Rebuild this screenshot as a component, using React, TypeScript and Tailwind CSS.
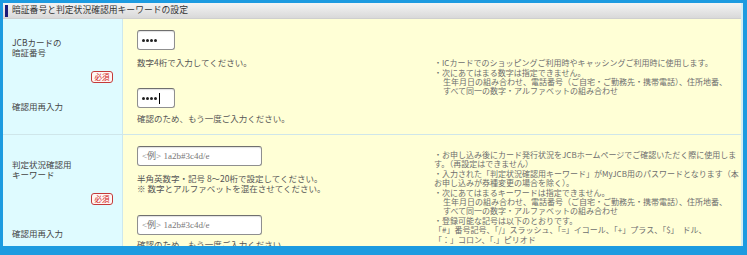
import React from 'react';

const font = "font-['Noto_Sans_CJK_JP','Noto_Sans',sans-serif]";

const pinNotes = [
  { text: '・ICカードでのショッピングご利用時やキャッシングご利用時に使用します。' },
  { text: '・次にあてはまる数字は指定できません。' },
  { text: '生年月日の組み合わせ、電話番号（ご自宅・ご勤務先・携帯電話）、住所地番、', indent: true },
  { text: 'すべて同一の数字・アルファベットの組み合わせ', indent: true },
];

const keywordNotes = [
  { text: '・お申し込み後にカード発行状況をJCBホームページでご確認いただく際に使用しま' },
  { text: 'す。（再設定はできません）' },
  { text: '・入力された「判定状況確認用キーワード」がMyJCB用のパスワードとなります（本' },
  { text: 'お申し込みが券種変更の場合を除く）。' },
  { text: '・次にあてはまるキーワードは指定できません。' },
  { text: '生年月日の組み合わせ、電話番号（ご自宅・ご勤務先・携帯電話）、住所地番、', indent: true },
  { text: 'すべて同一の数字・アルファベットの組み合わせ', indent: true },
  { text: '・登録可能な記号は以下のとおりです。' },
  { text: '「#」番号記号、「/」スラッシュ、「=」イコール、「+」プラス、「$」　ドル、' },
  { text: '「：」コロン、「.」ピリオド' },
];

function Notes({ lines }: { lines: { text: string; indent?: boolean }[] }) {
  return (
    <div className="text-[8px] leading-[9.4px] text-[#6e6e6e]">
      {lines.map((l, i) => (
        <div key={i} className={`whitespace-nowrap ${l.indent ? 'pl-[9px]' : ''}`}>
          {l.text}
        </div>
      ))}
    </div>
  );
}

function Required() {
  return (
    <div className="self-end mr-[9px] w-[22px] h-[12px] flex items-center justify-center rounded-[3px] border border-[#c43a3a] bg-[#fff6f4] text-[7.5px] leading-none text-[#d02020]">
      必須
    </div>
  );
}

function FakeInput({ width, children }: { width: string; children: React.ReactNode }) {
  return (
    <div
      className={`${width} h-[20px] flex items-center pl-[4px] bg-white rounded-[3px] border border-[#8f8f8f] border-t-[#6f6f6f] shadow-[inset_0_1px_1px_rgba(0,0,0,0.12)]`}
    >
      {children}
    </div>
  );
}

function Dots({ caret }: { caret?: boolean }) {
  return (
    <span className="flex items-center gap-[1px]">
      <span className="w-[3px] h-[3px] rounded-full bg-[#222]" />
      <span className="w-[3px] h-[3px] rounded-full bg-[#222]" />
      <span className="w-[3px] h-[3px] rounded-full bg-[#222]" />
      <span className="w-[3px] h-[3px] rounded-full bg-[#222]" />
      {caret && <span className="ml-[1px] w-[1px] h-[11px] bg-black" />}
    </span>
  );
}

function Placeholder() {
  return (
    <span className="text-[9px] leading-none text-[#777] font-['Liberation_Serif','Noto_Sans_CJK_JP',serif]">
      &lt;例&gt; 1a2b#3c4d/e
    </span>
  );
}

export default function App() {
  return (
    <div className={`w-[747px] h-[255px] bg-[#1d9be0] pt-[3px] pl-[3px] pr-[4px] pb-[9px] ${font}`}>
      <div className="h-[243px] overflow-hidden bg-[#ffffd6] border-r-2 border-[#d3eef4]">
        {/* header */}
        <div className="h-[16px] flex items-center gap-[4px] pl-[2px] bg-gradient-to-b from-[#f4f4f4] to-[#d9d9d9] border-b border-[#cfcfcf]">
          <div className="w-[3px] h-[12px] bg-[#1c1c78]" />
          <span className="text-[8.8px] leading-none text-[#333]">暗証番号と判定状況確認用キーワードの設定</span>
        </div>

        {/* row 1 */}
        <div className="grid grid-cols-[120px_1fr] h-[116px] border-b border-[#cfe6ea]">
          <div className="flex flex-col pl-[9px] pt-[18px] bg-[#dffbff] border-r border-[#cde8ee] text-[8.5px] leading-[10px] text-[#444]">
            <div>JCBカードの</div>
            <div>暗証番号</div>
            <div className="mt-[14px] flex flex-col">
              <Required />
            </div>
            <div className="mt-[18px]">確認用再入力</div>
          </div>
          <div className="grid grid-cols-[311px_1fr]">
            <div className="flex flex-col pl-[14px] pt-[11px] text-[8.5px] leading-[12px] text-[#555]">
              <FakeInput width="w-[38px]">
                <Dots />
              </FakeInput>
              <div className="mt-[6px]">数字4桁で入力してください。</div>
              <div className="mt-[20px]">
                <FakeInput width="w-[38px]">
                  <Dots caret />
                </FakeInput>
              </div>
              <div className="mt-[4px]">確認のため、もう一度ご入力ください。</div>
            </div>
            <div className="self-center pt-[1px]">
              <Notes lines={pinNotes} />
            </div>
          </div>
        </div>

        {/* row 2 */}
        <div className="grid grid-cols-[120px_1fr] h-[140px]">
          <div className="flex flex-col pl-[9px] pt-[24px] bg-[#dffbff] border-r border-[#cde8ee] text-[8.5px] leading-[10px] text-[#444]">
            <div>判定状況確認用</div>
            <div>キーワード</div>
            <div className="mt-[14px] flex flex-col">
              <Required />
            </div>
            <div className="mt-[23px]">確認用再入力</div>
          </div>
          <div className="grid grid-cols-[311px_1fr]">
            <div className="flex flex-col pl-[14px] pt-[11px] text-[8.5px] text-[#555]">
              <FakeInput width="w-[125px]">
                <Placeholder />
              </FakeInput>
              <div className="mt-[7px] leading-[10px]">
                <div>半角英数字・記号 8～20桁で設定してください。</div>
                <div>※ 数字とアルファベットを混在させてください。</div>
              </div>
              <div className="mt-[22px]">
                <FakeInput width="w-[125px]">
                  <Placeholder />
                </FakeInput>
              </div>
              <div className="mt-[3px] leading-[12px]">確認のため、もう一度ご入力ください。</div>
            </div>
            <div className="pt-[15px]">
              <Notes lines={keywordNotes} />
            </div>
          </div>
        </div>
      </div>
    </div>
  );
}
